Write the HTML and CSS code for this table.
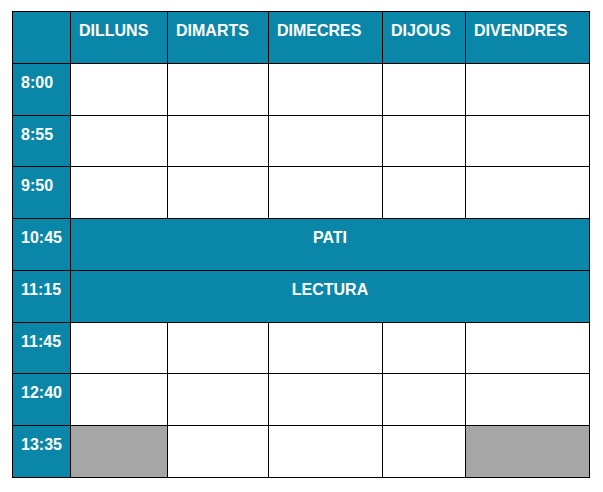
FILE: index.html
```html
<!DOCTYPE html>
<html lang="ca">
<head>
<meta charset="utf-8">
<title>Horari</title>
<link rel="stylesheet" href="styles.css">
</head>
<body>
<table class="horari">
  <colgroup>
    <col class="c-hora">
    <col class="c-dl">
    <col class="c-dm">
    <col class="c-dc">
    <col class="c-dj">
    <col class="c-dv">
  </colgroup>
  <thead>
    <tr>
      <th class="head"></th>
      <th class="head">DILLUNS</th>
      <th class="head">DIMARTS</th>
      <th class="head">DIMECRES</th>
      <th class="head">DIJOUS</th>
      <th class="head">DIVENDRES</th>
    </tr>
  </thead>
  <tbody>
    <tr><th class="hora">8:00</th><td></td><td></td><td></td><td></td><td></td></tr>
    <tr><th class="hora">8:55</th><td></td><td></td><td></td><td></td><td></td></tr>
    <tr><th class="hora">9:50</th><td></td><td></td><td></td><td></td><td></td></tr>
    <tr><th class="hora">10:45</th><td class="franja" colspan="5">PATI</td></tr>
    <tr><th class="hora">11:15</th><td class="franja" colspan="5">LECTURA</td></tr>
    <tr><th class="hora">11:45</th><td></td><td></td><td></td><td></td><td></td></tr>
    <tr><th class="hora">12:40</th><td></td><td></td><td></td><td></td><td></td></tr>
    <tr><th class="hora">13:35</th><td class="buit"></td><td></td><td></td><td></td><td class="buit"></td></tr>
  </tbody>
</table>
</body>
</html>
```
FILE: styles.css
```css
html, body {
  margin: 0;
  padding: 0;
  background: #ffffff;
}

body {
  padding: 11px 0 0 12px;
  font-family: "Liberation Sans", Arial, sans-serif;
}

.horari {
  border-collapse: collapse;
  table-layout: fixed;
  width: 577px;
  border: 1px solid #000;
}

.horari tr {
  height: 51.78px;
}

.c-hora { width: 58px; }
.c-dl { width: 97px; }
.c-dm { width: 101px; }
.c-dc { width: 114px; }
.c-dj { width: 83px; }
.c-dv { width: 124px; }

.horari th,
.horari td {
  border: 1px solid #000;
  padding: 10px 0 0 8px;
  vertical-align: top;
  text-align: left;
  font-size: 16px;
  font-weight: bold;
  line-height: 18px;
  white-space: nowrap;
}

.head,
.hora {
  background: #0a87a8;
  color: #ffffff;
}

.franja {
  background: #0a87a8;
  color: #ffffff;
  text-align: center !important;
  padding-left: 0 !important;
}

.buit {
  background: #a6a6a6;
}
```
